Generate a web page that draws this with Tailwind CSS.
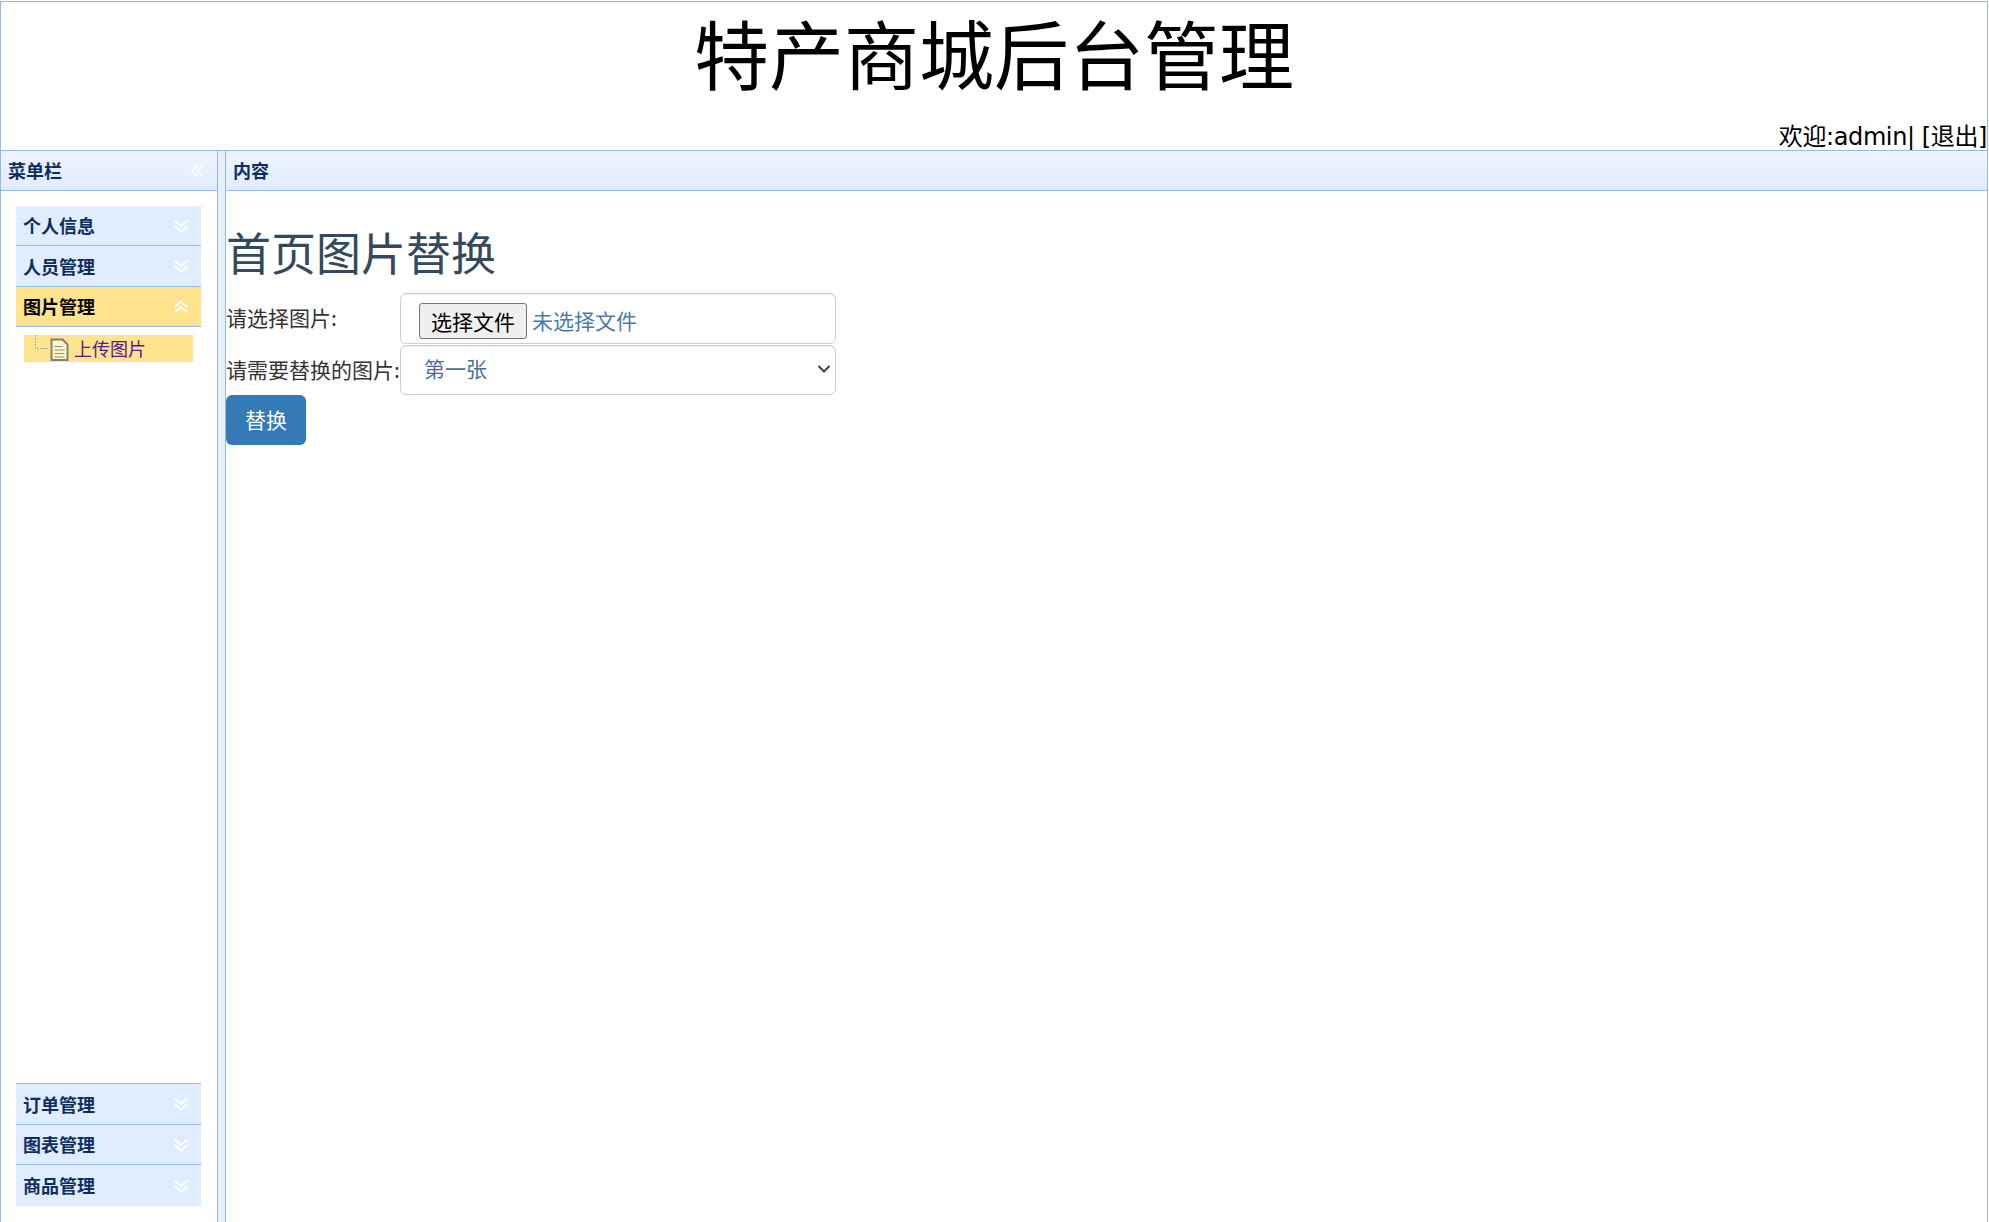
<!DOCTYPE html>
<html lang="zh-CN">
<head>
    <meta charset="UTF-8">
    <title>特产商城后台管理</title>
    <script src="https://cdn.jsdelivr.net/npm/@tailwindcss/browser@4"></script>
</head>
<body class="bg-white font-['Noto_Sans_CJK_SC',sans-serif] h-[1222px] pt-px overflow-hidden">
    <svg class="hidden">
        <symbol id="chev-down" viewBox="0 0 16 16"><path d="M1.500 2.500 8 8l6.500-5.500M1.500 8 8 13.500 14.500 8" fill="none" stroke="currentColor" stroke-width="2"/></symbol>
        <symbol id="chev-up" viewBox="0 0 16 16"><path d="M1.500 8 8 2.500 14.500 8M1.500 13.500 8 8l6.500 5.500" fill="none" stroke="currentColor" stroke-width="2"/></symbol>
    </svg>

    <div class="h-full w-[1988px] flex flex-col border-t border-l border-r border-[#95B8E7]">
        <!-- top banner -->
        <header class="h-[148px] shrink-0 flex flex-col">
            <h1 class="h-[110px] text-center text-[75px] leading-[100px] text-black">特产商城后台管理</h1>
            <div class="h-[38px] flex justify-end items-end text-[24px] leading-[26px] text-black font-['DejaVu_Sans','Noto_Sans_CJK_SC',sans-serif] tracking-[-0.4px] whitespace-pre">欢迎:admin| [退出]</div>
        </header>

        <div class="flex-1 flex min-h-0 border-t border-[#95B8E7]">
            <!-- left menu -->
            <aside class="w-[217px] shrink-0 flex flex-col border-r border-[#95B8E7]">
                <div class="h-[40px] shrink-0 flex items-center justify-between pl-[7px] pr-[13px] border-b border-[#95B8E7] bg-gradient-to-b from-[#EFF5FF] to-[#E0ECFF]">
                    <span class="text-[18px] font-bold text-[#0E2D5F]">菜单栏</span>
                    <svg class="w-[14px] h-[14px] text-white" viewBox="0 0 16 16"><path d="M8 2 2 8l6 6M14 2 8 8l6 6" fill="none" stroke="currentColor" stroke-width="2"/></svg>
                </div>
                <div class="flex-1 flex flex-col pt-[15px] pb-[16px] pl-[15px] pr-[16px] min-h-0">
                    <div class="h-[40px] flex items-center justify-between pl-[7px] pr-[12px] bg-[#E0ECFF] border-b border-[#95B8E7] text-[18px] font-bold text-[#0E2D5F]">
                        <span>个人信息</span><svg class="w-[16px] h-[16px] text-white"><use href="#chev-down"/></svg>
                    </div>
                    <div class="h-[41px] flex items-center justify-between pl-[7px] pr-[12px] bg-[#E0ECFF] border-b border-[#95B8E7] text-[18px] font-bold text-[#0E2D5F]">
                        <span>人员管理</span><svg class="w-[16px] h-[16px] text-white"><use href="#chev-down"/></svg>
                    </div>
                    <div class="h-[40px] flex items-center justify-between pl-[7px] pr-[12px] bg-[#FFE48D] border-b border-[#95B8E7] text-[18px] font-bold text-black">
                        <span>图片管理</span><svg class="w-[16px] h-[16px] text-white"><use href="#chev-up"/></svg>
                    </div>
                    <div class="flex-1 pt-[8px] px-[8px]">
                        <a class="h-[27px] flex items-center bg-[#FFE48D] text-[18px] text-[#551A8B]">
                            <svg class="w-[45px] h-[27px] shrink-0" viewBox="0 0 45 27">
                                <path d="M11.500 0V13.500H24" fill="none" stroke="#999" stroke-dasharray="1.500 1.500"/>
                                <path d="M27.500 4.500h11l5 5v15.500h-16z" fill="#FFF6C8" stroke="#808080" stroke-width="2"/>
                                <path d="M30.500 11.500h8M30.500 15h10M30.500 18.500h10M30.500 22h10" stroke="#909090"/>
                            </svg>
                            <span class="ml-[5px]">上传图片</span>
                        </a>
                    </div>
                    <div class="h-[41px] flex items-center justify-between pl-[7px] pr-[12px] bg-[#E0ECFF] border-t border-[#95B8E7] text-[18px] font-bold text-[#0E2D5F]">
                        <span>订单管理</span><svg class="w-[16px] h-[16px] text-white"><use href="#chev-down"/></svg>
                    </div>
                    <div class="h-[40px] flex items-center justify-between pl-[7px] pr-[12px] bg-[#E0ECFF] border-t border-[#95B8E7] text-[18px] font-bold text-[#0E2D5F]">
                        <span>图表管理</span><svg class="w-[16px] h-[16px] text-white"><use href="#chev-down"/></svg>
                    </div>
                    <div class="h-[42px] flex items-center justify-between pl-[7px] pr-[12px] bg-[#E0ECFF] border-t border-[#95B8E7] text-[18px] font-bold text-[#0E2D5F]">
                        <span>商品管理</span><svg class="w-[16px] h-[16px] text-white"><use href="#chev-down"/></svg>
                    </div>
                </div>
            </aside>

            <!-- splitter -->
            <div class="w-[7px] shrink-0 bg-[#E6EEF8]"></div>

            <!-- content -->
            <main class="flex-1 flex flex-col border-l border-[#95B8E7] min-w-0">
                <div class="h-[40px] shrink-0 flex items-center pl-[7px] border-b border-[#95B8E7] bg-gradient-to-b from-[#EFF5FF] to-[#E0ECFF]">
                    <span class="text-[18px] font-bold text-[#0E2D5F]">内容</span>
                </div>
                <div class="pt-[33px] text-[21px] text-[#333]">
                    <h2 class="h-[69px] text-[45px] leading-[56px] text-[#34495E]">首页图片替换</h2>
                    <div class="flex items-center h-[51px]">
                        <label class="w-[174px] shrink-0 pb-[2px]">请选择图片:</label>
                        <div class="w-[436px] h-[51px] flex items-center pl-[18px] pt-[4px] bg-white border border-[#C8CEDB] rounded-[6px] shadow-[inset_0_1px_1px_rgba(0,0,0,0.075)] text-[#4A7AA8]">
                            <button class="w-[108px] h-[36px] bg-[#EFEFEF] border border-[#767676] rounded-[3px] text-[21px] leading-[30px] text-black">选择文件</button>
                            <span class="ml-[5px]">未选择文件</span>
                        </div>
                    </div>
                    <div class="flex items-end h-[51px]">
                        <label class="w-[174px] shrink-0 whitespace-nowrap pb-[10px]">请需要替换的图片:</label>
                        <div class="relative w-[436px]">
                            <select class="w-full h-[50px] appearance-none pl-[23px] pb-[2px] bg-white border border-[#C8CEDB] rounded-[6px] shadow-[inset_0_1px_1px_rgba(0,0,0,0.075)] text-[21px] text-[#4A6E96]">
                                <option>第一张</option>
                            </select>
                            <svg class="absolute right-[5px] top-[18px] w-[14px] h-[12px] text-[#34495E]" viewBox="0 0 14 12"><path d="M1.500 3 7 8.500 12.500 3" fill="none" stroke="currentColor" stroke-width="2"/></svg>
                        </div>
                    </div>
                    <button class="w-[80px] h-[50px] bg-[#337AB7] rounded-[6px] text-white text-[21px]">替换</button>
                </div>
            </main>
        </div>
    </div>
</body>
</html>
